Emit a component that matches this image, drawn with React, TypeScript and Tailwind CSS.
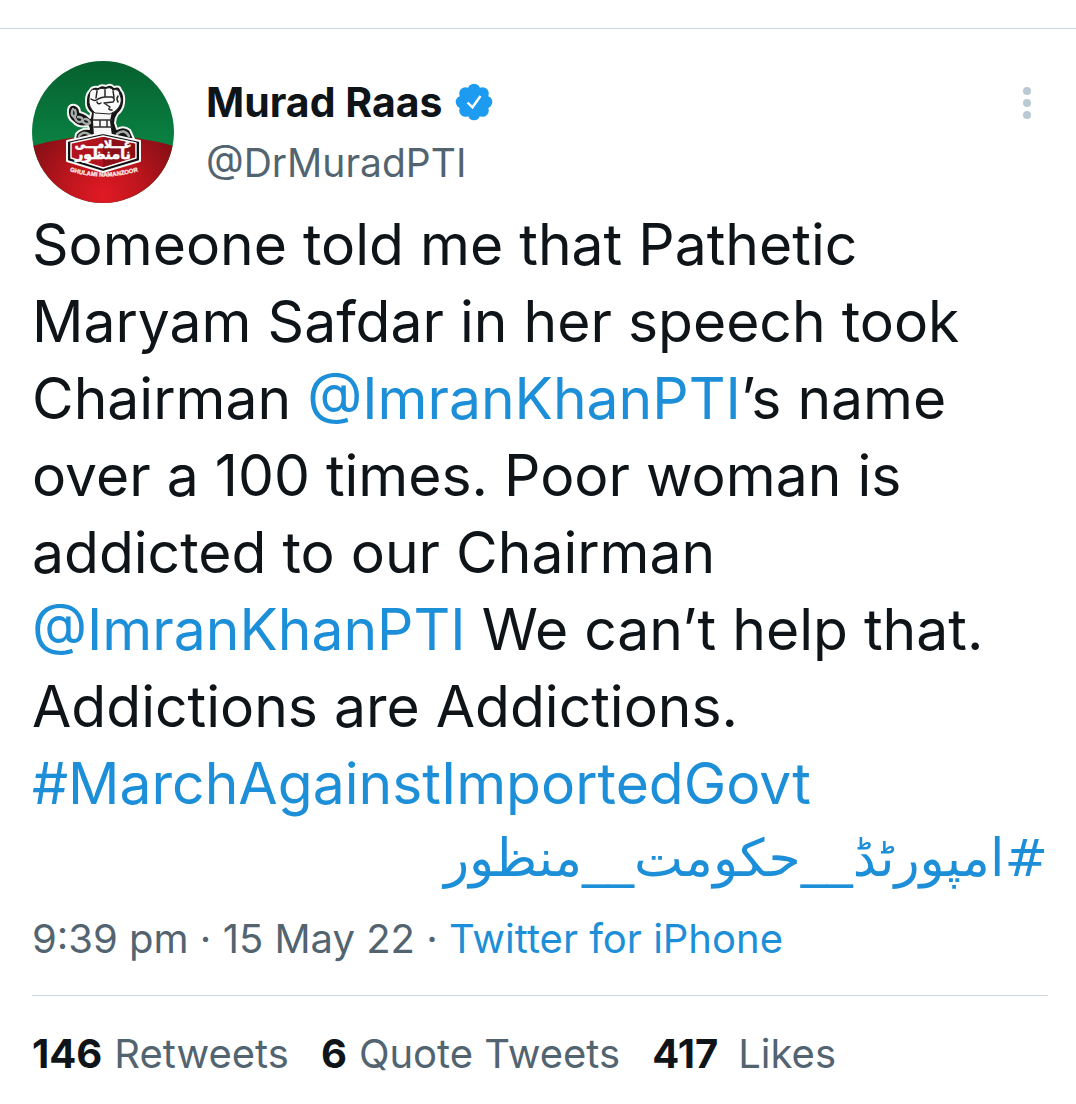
import React from "react";

function Avatar() {
  return (
    <svg viewBox="0 0 142 142" className="size-[142px] shrink-0" role="img" aria-label="Murad Raas avatar">
      <defs>
        <clipPath id="disc">
          <circle cx="71" cy="71" r="71" />
        </clipPath>
        <linearGradient id="green" x1="0" y1="0" x2="0" y2="1">
          <stop offset="0" stopColor="#06602f" />
          <stop offset="0.6" stopColor="#0a8242" />
        </linearGradient>
        <radialGradient id="red" cx="71" cy="134" r="80" gradientUnits="userSpaceOnUse">
          <stop offset="0" stopColor="#e01a24" />
          <stop offset="0.5" stopColor="#bc151d" />
          <stop offset="1" stopColor="#8a1016" />
        </radialGradient>
        <path id="caption" d="M34 109Q71 122 110 109" />
      </defs>
      <g clipPath="url(#disc)">
        <rect width="142" height="142" fill="url(#green)" />
        <path d="M0 85Q36 75 71 74Q106 75 142 85V142H0Z" fill="url(#red)" />
      </g>
      <g strokeLinejoin="round" strokeLinecap="round">
        {/* chain and fist silhouette */}
        <path
          d="M58 29Q60 25 66 26Q69 23 74 25Q79 22 82 26Q88 24 89 29Q93 33 92 42Q91 49 86 53Q83 57 83 62L85 68Q92 64 98 69L102 78H43L44 73Q49 67 57 68L56 65Q46 67 41 61Q35 57 36 49Q37 43 43 44Q48 46 48 51Q55 53 58 57L59 52Q53 48 54 39Q54 33 58 29Z"
          fill="#151515"
          stroke="#f5f7f5"
          strokeWidth="2"
        />
        <g fill="none" stroke="#a9adaa" strokeWidth="2.4">
          <path d="M41 48Q38 53 42 56Q45 54 43 49" />
          <path d="M43 57Q45 63 51 60Q51 56 46 56" />
          <path d="M50 60Q54 65 58 62Q57 58 53 58" />
          <path d="M47 75Q52 69 58 74" />
          <path d="M85 73Q92 67 97 75" />
        </g>
        <path d="M61 60L62 50H80L78 60L80 75H62Z" fill="#f7f7f7" />
        <path d="M61 59H80M62 66H80M68 59V66M75 59V66" stroke="#303030" strokeWidth="1.5" />
        <path
          d="M58 31Q60 27 65 29Q69 26 73 28Q78 25 81 29Q87 27 88 34Q91 40 87 46Q84 51 78 53L63 52Q56 46 57 38Z"
          fill="#fafafa"
          stroke="#222"
          strokeWidth="1"
        />
        <path
          d="M65 30L64 37M73 29V36M81 30L82 36M59 38Q63 41 66 38Q70 36 73 36H80Q84 38 81 41L72 42L78 46Q75 49 80 49M65 41Q66 44 69 42M86 35Q84 38 86 41"
          stroke="#252525"
          strokeWidth="1.5"
          fill="none"
        />
        {/* hexagonal sign */}
        <path d="M35 80L71 72L108 80V100L71 111L35 100Z" fill="#111" stroke="#f7f7f7" strokeWidth="2" />
        <path d="M39 82L71 75L104 82V97L71 107L39 97Z" fill="#b0151f" stroke="#fff" strokeWidth="1.4" />
        <path d="M71 76L103 83V96L71 106Z" fill="#8b1018" />
      </g>
      <g
        fill="#fff"
        stroke="#fff"
        strokeWidth="0.6"
        fontFamily="'DejaVu Sans', sans-serif"
        fontWeight="700"
        textAnchor="middle"
      >
        <text x="71" y="87" fontSize="11">غـــلامـــی</text>
        <text x="71" y="98" fontSize="14">نامنظور</text>
      </g>
      <text
        fontFamily="'Liberation Sans', sans-serif"
        fontSize="6"
        fontWeight="700"
        fill="#fbeaea"
        stroke="#fbeaea"
        strokeWidth="0.3"
      >
        <textPath href="#caption" startOffset="50%" textAnchor="middle">
          GHULAMI NAMANZOOR
        </textPath>
      </text>
    </svg>
  );
}

function VerifiedBadge() {
  return (
    <svg viewBox="0 0 38 38" className="size-[38px] shrink-0" role="img" aria-label="Verified account">
      <g fill="#1d9bf0">
        <circle cx="19" cy="19" r="14" />
        <circle cx="19" cy="7" r="6.3" />
        <circle cx="27.5" cy="10.5" r="6.3" />
        <circle cx="31" cy="19" r="6.3" />
        <circle cx="27.5" cy="27.5" r="6.3" />
        <circle cx="19" cy="31" r="6.3" />
        <circle cx="10.5" cy="27.5" r="6.3" />
        <circle cx="7" cy="19" r="6.3" />
        <circle cx="10.5" cy="10.5" r="6.3" />
      </g>
      <path d="M12.5 19.5L17.5 24.3L25.5 13" fill="none" stroke="#fff" strokeWidth="2.4" />
    </svg>
  );
}

const stats = [
  { count: "146", label: "Retweets", gap: "gap-3" },
  { count: "6", label: "Quote Tweets", gap: "gap-3" },
  { count: "417", label: "Likes", gap: "gap-5" },
];

export default function App() {
  return (
    <main className="min-h-screen bg-white pt-7 font-['Inter',sans-serif] text-[#0f1419]">
      <article className="border-t border-[#cfd9de] pt-8 pr-7 pl-8">
        <header className="flex items-start">
          <Avatar />
          <div className="ml-8 flex-1 pt-3">
            <div className="flex items-center gap-3">
              <h1 className="text-[41px] leading-[58px] font-bold">Murad Raas</h1>
              <VerifiedBadge />
            </div>
            <a href="#profile" className="block text-[39px] leading-[64px] text-[#536471]">@DrMuradPTI</a>
          </div>
          <button type="button" aria-label="More options" className="mt-6 mr-4 p-0">
            <svg viewBox="0 0 10 36" className="h-9 w-[10px]" fill="#b9cad3">
              <circle cx="5" cy="6" r="4" />
              <circle cx="5" cy="18" r="4" />
              <circle cx="5" cy="30" r="4" />
            </svg>
          </button>
        </header>

        <div className="mt-[3px] text-[57px] leading-[77px]">
          <p>
            Someone told me that Pathetic Maryam Safdar in her speech took Chairman{" "}
            <a href="#imran" className="text-[#1d8fd8]">@ImranKhanPTI</a>’s name over a 100 times. Poor woman is
            addicted to our Chairman <a href="#imran" className="text-[#1d8fd8]">@ImranKhanPTI</a> We can’t help that.
            Addictions are Addictions.
          </p>
          <p>
            <a href="#march" className="text-[#1d8fd8]">#MarchAgainstImportedGovt</a>
          </p>
          <p dir="rtl" lang="ur" className="font-['DejaVu_Sans',sans-serif] text-[52px] leading-[72px]">
            <a href="#hukumat" className="text-[#1d8fd8]">#امپورٹڈ__حکومت__منظور</a>
          </p>
        </div>

        <p className="mt-5 border-b border-[#cfd9de] pb-8 text-[40px] leading-[49px] text-[#536471]">
          9:39 pm · 15 May 22 · <a href="#source" className="text-[#1d8fd8]">Twitter for iPhone</a>
        </p>

        <ul className="flex gap-8 pt-8 text-[40px] leading-[52px]">
          {stats.map((s) => (
            <li key={s.label}>
              <a href="#stats" className={`flex ${s.gap}`}>
                <strong className="font-bold">{s.count}</strong>
                <span className="text-[#536471]">{s.label}</span>
              </a>
            </li>
          ))}
        </ul>
      </article>
    </main>
  );
}
